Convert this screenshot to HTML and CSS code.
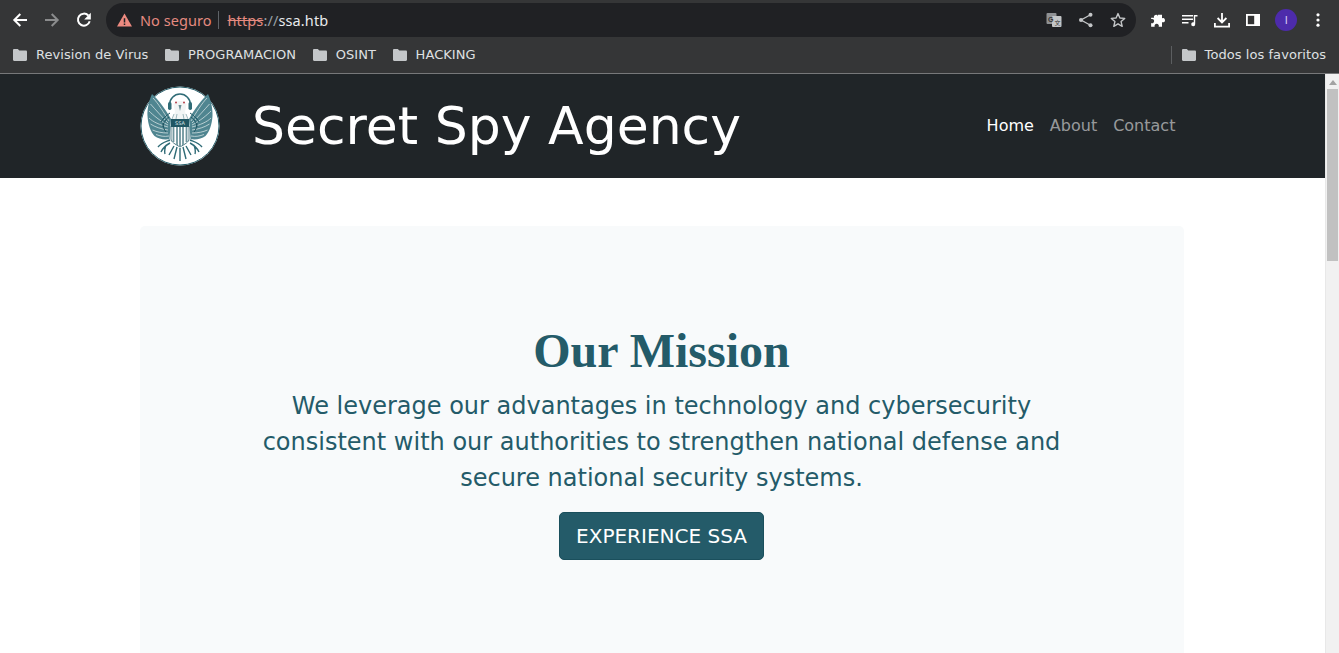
FILE: index.html
```html
<!DOCTYPE html>
<html lang="es">
<head>
<meta charset="utf-8">
<title>Secret Spy Agency</title>
<link rel="stylesheet" href="styles.css">
</head>
<body>
<div class="browser">
  <div class="toolbar">
    <div class="nav-btns">
      <svg class="ic" viewBox="0 0 16 16"><path d="M15 8H2.500M8.300 2 2.300 8l6 6" fill="none" stroke="#fff" stroke-width="2"/></svg>
      <svg class="ic" viewBox="0 0 16 16"><path d="M1 8h12.500M7.700 2l6 6-6 6" fill="none" stroke="#8b8c8d" stroke-width="2"/></svg>
      <svg class="ic" viewBox="0 0 16 16"><path d="M13.700 9.300A6 6 0 1 1 12.300 3.500" fill="none" stroke="#fff" stroke-width="2"/><path d="M14.800 .8v6.600H8.200z" fill="#fff"/></svg>
    </div>
    <div class="omnibox">
      <svg class="warn" viewBox="0 0 16 14"><path d="M8 0 16 14H0z" fill="#ed8a80"/><path d="M7.200 5h1.600v4.600H7.200zM7.200 10.600h1.600v1.600H7.200z" fill="#202124"/></svg>
      <span class="unsafe">No seguro</span>
      <span class="omni-sep"></span>
      <span class="url"><span class="scheme">https</span><span class="slashes">://</span>ssa.htb</span>
      <span class="omni-actions">
        <svg class="ic-s" viewBox="0 0 16 16"><rect x="0.500" y="1" width="10" height="11" rx="1" fill="#8f9194"/><rect x="6" y="4" width="9.500" height="11" rx="1" fill="#c4c6c8"/><text x="2" y="9.500" class="gl">G</text><text x="8.500" y="13" class="gl2">文</text></svg>
        <svg class="ic-s" viewBox="0 0 16 16"><circle cx="12.500" cy="2.800" r="2" fill="#c4c6c8"/><circle cx="12.500" cy="13.200" r="2" fill="#c4c6c8"/><circle cx="3" cy="8" r="2" fill="#c4c6c8"/><path d="M12.500 2.800 3 8l9.500 5.200" fill="none" stroke="#c4c6c8" stroke-width="1.300"/></svg>
        <svg class="ic-s" viewBox="0 0 16 16"><path d="M8 1.600 9.900 6l4.800.4-3.600 3.200 1.100 4.700L8 11.800l-4.200 2.500 1.100-4.700L1.300 6.400 6.100 6z" fill="none" stroke="#c4c6c8" stroke-width="1.400" stroke-linejoin="round"/></svg>
      </span>
    </div>
    <div class="tools">
      <svg class="ic" viewBox="0 1 14 14"><path d="M1 6h2.500a1.800 1.800 0 1 1 3.400-1.300V3.500h3.600v3a1.900 1.900 0 1 1 1.500 3.500h-1.500v4H7.600a1.900 1.900 0 1 0-3.500 0H1v-3.300a1.900 1.900 0 1 0 0-3.500z" fill="#fff"/></svg>
      <svg class="ic" viewBox="0 0 16 16"><path d="M0 3h11v1.400H0zM0 6.500h11v1.400H0zM0 10h6.500v1.400H0z" fill="#fff"/><path d="M11.800 3h3.700v1.400h-2.300v7.800a2 2 0 1 1-1.400-1.900z" fill="#fff"/></svg>
      <svg class="ic" viewBox="0 0 16 16"><path d="M8 1v9.200M3.600 6 8 10.400 12.400 6M.9 11v3.700h14.200V11" fill="none" stroke="#fff" stroke-width="1.800"/></svg>
      <svg class="ic" viewBox="0 0 16 16"><path d="M1 2h14v12H1z" fill="#fff"/><path d="M2.800 3.800h6.400v8.400H2.800z" fill="#333"/></svg>
      <span class="avatar">I</span>
      <svg class="ic" viewBox="0 0 16 16"><circle cx="8" cy="2.800" r="1.600" fill="#fff"/><circle cx="8" cy="8" r="1.600" fill="#fff"/><circle cx="8" cy="13.200" r="1.600" fill="#fff"/></svg>
    </div>
  </div>
  <div class="bookmarks">
    <a class="bm"><svg class="folder" viewBox="0 0 14 12"><path d="M0 1.200C0 .5.500 0 1.200 0h3.600l1.500 1.600h6.500c.7 0 1.200.5 1.200 1.200v8c0 .7-.5 1.200-1.200 1.200H1.200C.5 12 0 11.500 0 10.800z" fill="#c4c7c9"/></svg>Revision de Virus</a>
    <a class="bm"><svg class="folder" viewBox="0 0 14 12"><path d="M0 1.200C0 .5.500 0 1.200 0h3.600l1.500 1.600h6.500c.7 0 1.200.5 1.200 1.200v8c0 .7-.5 1.200-1.200 1.200H1.200C.5 12 0 11.500 0 10.800z" fill="#c4c7c9"/></svg>PROGRAMACION</a>
    <a class="bm"><svg class="folder" viewBox="0 0 14 12"><path d="M0 1.200C0 .5.500 0 1.200 0h3.600l1.500 1.600h6.500c.7 0 1.200.5 1.200 1.200v8c0 .7-.5 1.200-1.200 1.200H1.200C.5 12 0 11.500 0 10.800z" fill="#c4c7c9"/></svg>OSINT</a>
    <a class="bm"><svg class="folder" viewBox="0 0 14 12"><path d="M0 1.200C0 .5.500 0 1.200 0h3.600l1.500 1.600h6.500c.7 0 1.200.5 1.200 1.200v8c0 .7-.5 1.200-1.200 1.200H1.200C.5 12 0 11.500 0 10.800z" fill="#c4c7c9"/></svg>HACKING</a>
    <span class="bm-end"><a class="bm"><svg class="folder" viewBox="0 0 14 12"><path d="M0 1.200C0 .5.500 0 1.200 0h3.600l1.500 1.600h6.500c.7 0 1.200.5 1.200 1.200v8c0 .7-.5 1.200-1.200 1.200H1.200C.5 12 0 11.500 0 10.800z" fill="#c4c7c9"/></svg>Todos los favoritos</a></span>
  </div>
</div>
<div class="viewport">
  <div class="page">
    <header class="site-header">
      <div class="container head-row">
        <a class="brand">
          <svg class="logo" viewBox="0 0 80 80">
            <defs>
              <g id="wing">
                <path d="M31 33C26 24 18 13 12 8 9 14 7 24 7.500 30c.5 8 3 16 7 20 4 3 10 4 15 3z" fill="#4f8590"/>
                <g fill="none" stroke="#e4eced" stroke-width=".7">
                  <path d="M29 35C24 27 18 17 13 12"/>
                  <path d="M28 37C22 31 15 23 10.500 18"/>
                  <path d="M28 39C20 35 13 29 9 25"/>
                  <path d="M28 41C20 39 13 36 9 32"/>
                  <path d="M28 44C21 43 15 41 10.500 38"/>
                  <path d="M28 47C22 47 17 46 12.500 44"/>
                  <path d="M29 50C24 51 20 50 16 48.500"/>
                </g>
                <g fill="none" stroke="#1f5663" stroke-width="1">
                  <path d="M30 27c-3 2-7 5-9 9M29 31c-3 2-6 6-6 10M26 46c-2-2-3-6-3-9"/>
                </g>
              </g>
            </defs>
            <circle cx="40" cy="40" r="39.500" fill="#fff"/>
            <circle cx="40" cy="40" r="39" fill="none" stroke="#245c68" stroke-width="1"/>
            <use href="#wing"/>
            <use href="#wing" transform="matrix(-1 0 0 1 80 0)"/>
            <g fill="none" stroke="#2f6b76" stroke-width="1.400">
              <path d="M30 54c-5 2-9 3-12 7M30 57c-4 2-7 5-9 9M26 59c-1 3-2 6-1 9M50 54c5 2 9 3 12 7M50 57c4 2 7 5 9 9M54 59c1 3 2 6 1 9"/>
              <path d="M34 60l-5 9M37 61l-3 12M40 62v13M43 61l3 12M46 60l5 9"/>
            </g>
            <path d="M29.500 19a10.500 11 0 0 1 21 0" fill="none" stroke="#2f6b76" stroke-width="1.500"/>
            <rect x="28" y="16" width="3.500" height="8" rx="1.700" fill="#2f6b76"/>
            <rect x="48.500" y="16" width="3.500" height="8" rx="1.700" fill="#2f6b76"/>
            <path d="M33.500 18c2-4 11-4 13 0l-1.500 8 3 7H32l3-7z" fill="#f2f5f5"/>
            <path d="M34 28l-2 5M46 28l2 5M37 28l-1 5M43 28l1 5" stroke="#8aa8ae" stroke-width=".8"/>
            <circle cx="36" cy="16.500" r="1" fill="#b5404a"/><circle cx="44" cy="16.500" r="1" fill="#b5404a"/>
            <path d="M38.500 19h3L40 25z" fill="#6d8f96"/>
            <path d="M31 40h18v13c0 3-4 5-9 8-5-3-9-5-9-8z" fill="#fff" stroke="#245c68" stroke-width=".8"/>
            <path d="M33.500 41v15M37 41v18M40 41v19M43 41v18M46.500 41v15" stroke="#6f959d" stroke-width="1.800"/>
            <rect x="31" y="33" width="18" height="8" fill="#1f5663"/>
            <text x="40" y="39" class="logo-text">SSA</text>
          </svg>
          <span class="site-title">Secret Spy Agency</span>
        </a>
        <nav class="main-nav">
          <a class="nav-link active">Home</a>
          <a class="nav-link">About</a>
          <a class="nav-link">Contact</a>
        </nav>
      </div>
    </header>
    <main class="container">
      <section class="hero">
        <h1 class="hero-title">Our Mission</h1>
        <p class="hero-text">We leverage our advantages in technology and cybersecurity consistent with our authorities to strengthen national defense and secure national security systems.</p>
        <a class="hero-btn">EXPERIENCE SSA</a>
      </section>
    </main>
  </div>
  <div class="scrollbar">
    <span class="arrow"></span>
    <span class="thumb"></span>
  </div>
</div>
</body>
</html>
```

FILE: styles.css
```css
* { box-sizing: border-box; }
html, body { margin: 0; height: 653px; overflow: hidden; }
body { font-family: "DejaVu Sans", sans-serif; background: #fff; display: flex; flex-direction: column; }

.browser { height: 74px; flex: none; background: #353637; border-bottom: 1px solid #77787a; }
.toolbar { height: 40px; display: flex; align-items: center; padding: 3px 0 3px 12px; }
.nav-btns { display: flex; gap: 16px; width: 94px; flex: none; }
.ic { width: 16px; height: 16px; flex: none; }
.omnibox { width: 1030px; height: 34px; flex: none; background: #202124; border-radius: 17px; display: flex; align-items: center; padding-left: 11px; font-size: 14.5px; letter-spacing: .05px; font-family: "Noto Sans", sans-serif; }
.warn { width: 15px; height: 14px; flex: none; margin-right: 8px; }
.unsafe { color: #e58a80; }
.omni-sep { width: 1px; height: 18px; background: #5f6368; margin: 0 9px 0 6px; }
.url { color: #e8eaed; letter-spacing: .12px; }
.scheme { color: #e58a80; text-decoration: line-through; }
.slashes { color: #9aa0a6; }
.omni-actions { margin-left: auto; display: flex; gap: 16px; padding-right: 10px; }
.ic-s { width: 16px; height: 16px; }
.gl { font: 700 7px "Liberation Sans", sans-serif; fill: #333; }
.gl2 { font: 6px "Noto Sans CJK SC", sans-serif; fill: #333; }
.tools { display: flex; align-items: center; gap: 15.6px; margin-left: 14.4px; }
.avatar { width: 22px; height: 22px; border-radius: 50%; background: #4d2bab; color: #d8cdf5; font: 11px/22px "Liberation Sans", sans-serif; text-align: center; margin: 0 -3px 0 -1.600px; flex: none; }
.bookmarks { height: 33px; display: flex; align-items: center; padding: 0 13px 4px; gap: 16.6px; color: #dfe0e2; font-size: 13px; letter-spacing: .06px; }
.bm { display: flex; align-items: center; gap: 9px; }
.folder { width: 14px; height: 12px; flex: none; }
.bm-end { margin-left: auto; border-left: 1px solid #5c5e60; padding-left: 10px; height: 18px; display: flex; align-items: center; }

.viewport { flex: 1; display: flex; min-height: 0; }
.page { flex: 1; min-width: 0; overflow: hidden; }
.container { width: 1044px; margin: 0 141px 0 140px; }
.site-header { background: #202528; height: 104px; }
.head-row { display: flex; align-items: center; justify-content: space-between; height: 104px; }
.brand { display: flex; align-items: center; gap: 32px; }
.logo { width: 80px; height: 80px; flex: none; }
.logo-text { font: 5px "DejaVu Sans", sans-serif; fill: #dfe9ea; text-anchor: middle; }
.site-title { color: #fff; font-size: 52px; line-height: 1.2; }
.main-nav { display: flex; padding: 0 .6px 2px 0; }
.nav-link { color: rgba(255,255,255,.55); font-size: 16px; padding: 0 8px; }
.nav-link.active { color: #fff; }

main { padding-top: 48px; }
.hero { background: #f8fafb; border-radius: 5px; height: 440px; padding: 96px 1px 0 0; display: flex; flex-direction: column; align-items: center; color: #245b69; }
.hero-title { font: 700 48px/1.2 "Liberation Serif", serif; margin: 0 0 8px; color: #245b69; }
.hero-text { font-size: 24px; font-weight: 400; line-height: 36px; text-align: center; width: 836px; margin: 0 0 16px; }
.hero-btn { background: #245b69; color: #fff; font-size: 20px; line-height: 30px; padding: 8px 16px; border-radius: 5px; border: 1px solid #1a4f5c; }

.scrollbar { width: 14px; flex: none; background: #f1f1f1; border-left: 1px solid #e8e8e8; }
.arrow { display: block; margin: 6px auto 0; width: 0; height: 0; border: 4px solid transparent; border-top: 0; border-bottom: 5px solid #a3a3a3; }
.thumb { display: block; width: 11px; height: 172px; margin: 4px 0 0 1px; background: #c1c1c1; }
```
